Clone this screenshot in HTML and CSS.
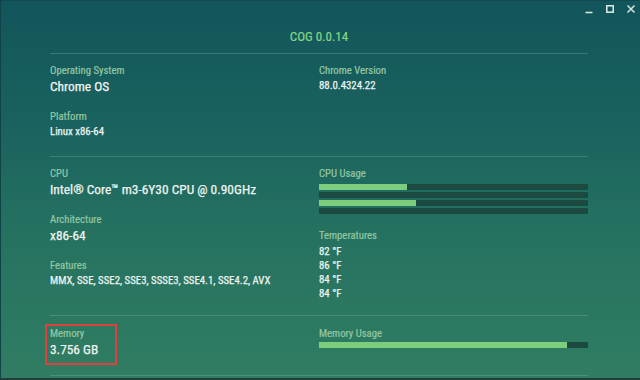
FILE: index.html
```html
<!DOCTYPE html>
<html>
<head>
<meta charset="utf-8">
<link rel="stylesheet" href="styles.css">
</head>
<body>
<div class="window">
  <div class="controls">
    <svg class="ctl" width="10" height="10" viewBox="0 0 10 10"><path d="M1.5 8.5h7" stroke="#d6e4e2" stroke-width="1.6"/></svg>
    <svg class="ctl" width="10" height="10" viewBox="0 0 10 10"><rect x="1.8" y="1.8" width="6.4" height="6.4" fill="none" stroke="#d6e4e2" stroke-width="1.6"/></svg>
    <svg class="ctl" width="10" height="10" viewBox="0 0 10 10"><path d="M1.5 1.5l7 7M8.5 1.5l-7 7" stroke="#d6e4e2" stroke-width="1.5"/></svg>
  </div>
  <header class="header"><h1 class="title">COG 0.0.14</h1></header>
  <div class="content">
    <section class="section">
      <div class="col">
        <div class="field"><div class="label">Operating System</div><div class="value big">Chrome OS</div></div>
        <div class="field"><div class="label">Platform</div><div class="value">Linux x86-64</div></div>
      </div>
      <div class="col">
        <div class="field"><div class="label">Chrome Version</div><div class="value">88.0.4324.22</div></div>
      </div>
    </section>
    <section class="section">
      <div class="col">
        <div class="field"><div class="label">CPU</div><div class="value big">Intel® Core™ m3-6Y30 CPU @ 0.90GHz</div></div>
        <div class="field"><div class="label">Architecture</div><div class="value big">x86-64</div></div>
        <div class="field"><div class="label">Features</div><div class="value">MMX, SSE, SSE2, SSE3, SSSE3, SSE4.1, SSE4.2, AVX</div></div>
      </div>
      <div class="col">
        <div class="field">
          <div class="label">CPU Usage</div>
          <div class="bars">
            <div class="bar"><div class="fill" style="width:88px"></div></div>
            <div class="bar"><div class="fill" style="width:0px"></div></div>
            <div class="bar"><div class="fill" style="width:97px"></div></div>
            <div class="bar"><div class="fill" style="width:0px"></div></div>
          </div>
        </div>
        <div class="field">
          <div class="label">Temperatures</div>
          <div class="temps">
            <div class="value temp">82 °F</div>
            <div class="value temp">86 °F</div>
            <div class="value temp">84 °F</div>
            <div class="value temp">84 °F</div>
          </div>
        </div>
      </div>
    </section>
    <section class="section last">
      <div class="col">
        <div class="field highlight"><div class="label">Memory</div><div class="value big">3.756 GB</div></div>
      </div>
      <div class="col">
        <div class="field">
          <div class="label">Memory Usage</div>
          <div class="bars mem"><div class="bar"><div class="fill" style="width:248px"></div></div></div>
        </div>
      </div>
    </section>
  </div>
</div>
</body>
</html>
```
FILE: styles.css
```css
* { box-sizing: border-box; }
html, body { margin: 0; padding: 0; }
body {
  width: 640px;
  height: 380px;
  overflow: hidden;
  font-family: "Roboto Condensed", "Liberation Sans Narrow", "DejaVu Sans Condensed", Roboto, sans-serif;
  font-stretch: condensed;
}
.window {
  position: relative;
  width: 640px;
  height: 380px;
  border-left: 1px solid #0f4446;
  border-top: 1px solid #104a4e;
  border-bottom: 2px solid #1f4038;
  background: linear-gradient(180deg, #12555b 0%, #1a635f 35%, #257160 60%, #307d63 100%);
}
.controls {
  position: absolute;
  top: 3px;
  right: 4px;
  display: flex;
  gap: 11px;
}
.ctl { display: block; }
.header {
  margin: 0 52px 0 49px;
  height: 53px;
  border-bottom: 1px solid rgba(120, 180, 170, 0.35);
  display: flex;
  justify-content: center;
  padding-top: 28px;
}
.title {
  margin: 0;
  font-size: 13px;
  line-height: 16px;
  font-weight: 400;
  color: #84d683;
  -webkit-text-stroke: 0.2px #84d683;
}
.content {
  padding: 0 52px 0 49px;
}
.section {
  display: grid;
  grid-template-columns: 269px 269px;
  padding-top: 10px;
  border-bottom: 1px solid rgba(140, 200, 170, 0.28);
}
.section:nth-child(1) { height: 103px; }
.section:nth-child(2) { height: 159px; }
.section.last { height: 60px; padding-top: 11px; }
.col {
  display: flex;
  flex-direction: column;
  gap: 15px;
}
.field { position: relative; }
.label {
  font-size: 10.7px;
  line-height: 14px;
  color: #93c7a2;
  -webkit-text-stroke: 0.2px #93c7a2;
}
.value {
  font-size: 10.8px;
  line-height: 16px;
  color: #eef4f0;
  -webkit-text-stroke: 0.25px #eef4f0;
}
.value.big {
  font-size: 13.4px;
  line-height: 17px;
}
.temp { line-height: 14px; }
.temps { padding-top: 2px; }
.bars {
  margin-top: 3px;
  display: flex;
  flex-direction: column;
  gap: 2px;
}
.bars.mem { margin-top: 1px; }
.bar {
  height: 6px;
  background: #1c4a40;
}
.fill {
  height: 100%;
  background: #7ccd7c;
}
.highlight::after {
  content: "";
  position: absolute;
  left: -5px;
  top: -3px;
  width: 68px;
  height: 37px;
  border: 2px solid #e0403c;
}
```
